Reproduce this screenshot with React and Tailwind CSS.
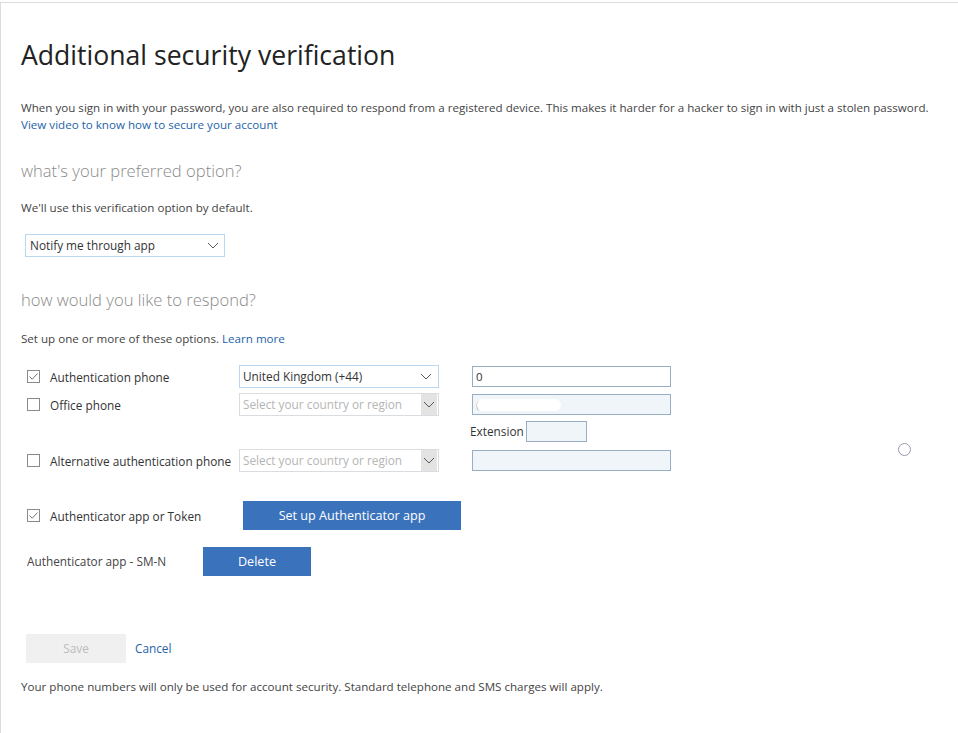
import { useState } from "react";

const font = { fontFamily: '"Open Sans", "Noto Sans", sans-serif' };

function Check({ checked }) {
  return (
    <span className="w-[13px] h-[13px] border border-[#8a8a8a] bg-white flex items-center justify-center shrink-0">
      {checked && (
        <svg width="11" height="11" viewBox="0 0 11 11">
          <path d="M1.5 5.5 L4.2 8.2 L9.5 2.5" fill="none" stroke="#777" strokeWidth="1" />
        </svg>
      )}
    </span>
  );
}

function Chevron() {
  return (
    <svg width="12" height="7" viewBox="0 0 12 7">
      <path d="M1 1 L6 6 L11 1" fill="none" stroke="#555" strokeWidth="1" />
    </svg>
  );
}

function CountrySelect({ value, disabled }) {
  return (
    <div className={`w-[200px] h-[23px] border flex items-center justify-between pl-[3px] ${disabled ? "border-[#d9dde2]" : "border-[#b9d7f0]"}`}>
      <span className={`text-[11.8px] ${disabled ? "text-[#b5b5b5]" : "text-[#333]"}`}>{value}</span>
      {disabled ? (
        <span className="w-[16px] h-[21px] bg-[#e3e3e3] flex items-center justify-center mr-px">
          <Chevron />
        </span>
      ) : (
        <span className="mr-[6px] flex"><Chevron /></span>
      )}
    </div>
  );
}

function PhoneRow({ checked, label, select, disabled, input }) {
  return (
    <div className="flex items-center">
      <div className="w-[212px] flex items-center gap-[10px]">
        <Check checked={checked} />
        <span className="text-[11.8px] text-[#333] whitespace-nowrap pt-[2px]">{label}</span>
      </div>
      <CountrySelect value={select} disabled={disabled} />
      <div className="ml-[33px]">{input}</div>
    </div>
  );
}

export default function App() {
  const [pref] = useState("Notify me through app");

  return (
    <div style={font} className="w-[958px] h-[733px] bg-white pt-[2px] overflow-hidden">
      <div className="h-full border-t border-l border-[#dcdcdc] pl-[20px]">
        <h1 className="text-[26.6px] leading-[36px] text-[#222] pt-[34px]">Additional security verification</h1>

        <p className="mt-[26px] text-[11.6px] leading-[17px] text-[#444] whitespace-nowrap">
          When you sign in with your password, you are also required to respond from a registered device. This makes it harder for a hacker to sign in with just a stolen password.
          <br />
          <a className="text-[#1e63a8]">View video to know how to secure your account</a>
        </p>

        <h2 className="mt-[26px] text-[16.6px] leading-[24px] text-[#8a8a8a] font-light">what's your preferred option?</h2>
        <p className="mt-[16px] text-[11.6px] leading-[17px] text-[#444]">We'll use this verification option by default.</p>
        <div className="mt-[18px] ml-[4px] w-[200px] h-[23px] border border-[#b9d7f0] flex items-center justify-between pl-[4px] pr-[5px]">
          <span className="text-[11.8px] text-[#333]">{pref}</span>
          <Chevron />
        </div>

        <h2 className="mt-[31px] text-[16.6px] leading-[24px] text-[#8a8a8a] font-light">how would you like to respond?</h2>
        <p className="mt-[18px] text-[11.6px] leading-[17px] text-[#444]">
          Set up one or more of these options. <a className="text-[#1e63a8]">Learn more</a>
        </p>

        <div className="mt-[18px] ml-[6px] flex flex-col">
          <PhoneRow
            checked
            label="Authentication phone"
            select="United Kingdom (+44)"
            input={
              <div className="w-[199px] h-[21px] border border-[#98aec4] bg-white flex items-center pl-[3px] text-[11.5px] text-[#333]">0</div>
            }
          />
          <div className="mt-[5px]">
            <PhoneRow
              label="Office phone"
              select="Select your country or region"
              disabled
              input={
                <div className="w-[199px] h-[21px] border border-[#98aec4] bg-[#f0f5fa] flex items-center pl-[3px] text-[11.5px] text-[#bbb]">
                  (<span className="ml-[-2px] w-[84px] h-[12px] rounded-full bg-white" />
                </div>
              }
            />
          </div>
          <div className="flex items-center ml-[443px] mt-[5px]">
            <span className="text-[11.8px] text-[#333]">Extension</span>
            <div className="ml-[2px] w-[61px] h-[21px] border border-[#98aec4] bg-[#f0f5fa]" />
          </div>
          <div className="mt-[7px] flex items-center">
            <PhoneRow
              label="Alternative authentication phone"
              select="Select your country or region"
              disabled
              input={<div className="w-[199px] h-[21px] border border-[#98aec4] bg-[#f0f5fa]" />}
            />
            <span className="ml-[227px] -translate-y-[11px] w-[13px] h-[13px] rounded-full border border-[#9a9ab0]" />
          </div>

          <div className="mt-[29px] flex items-center">
            <div className="w-[216px] flex items-center gap-[10px]">
              <Check checked />
              <span className="text-[11.8px] text-[#333] whitespace-nowrap pt-[2px]">Authenticator app or Token</span>
            </div>
            <button className="w-[218px] h-[29px] bg-[#3a72bc] text-white text-[12.6px] pt-[2px]">Set up Authenticator app</button>
          </div>

          <div className="mt-[17px] flex items-center">
            <span className="w-[140px] mr-[36px] text-[11.8px] text-[#444] whitespace-nowrap overflow-hidden">Authenticator app - SM-N</span>
            <button className="w-[108px] h-[29px] bg-[#3a72bc] text-white text-[12.6px] pt-[2px]">Delete</button>
          </div>
        </div>

        <div className="mt-[58px] ml-[5px] flex items-center">
          <button className="w-[100px] h-[29px] bg-[#f0f0f0] text-[#bcbcbc] text-[11.8px]">Save</button>
          <a className="ml-[9px] text-[11.8px] text-[#1e63a8]">Cancel</a>
        </div>

        <p className="mt-[15px] text-[11.6px] leading-[17px] text-[#444]">
          Your phone numbers will only be used for account security. Standard telephone and SMS charges will apply.
        </p>
      </div>
    </div>
  );
}
